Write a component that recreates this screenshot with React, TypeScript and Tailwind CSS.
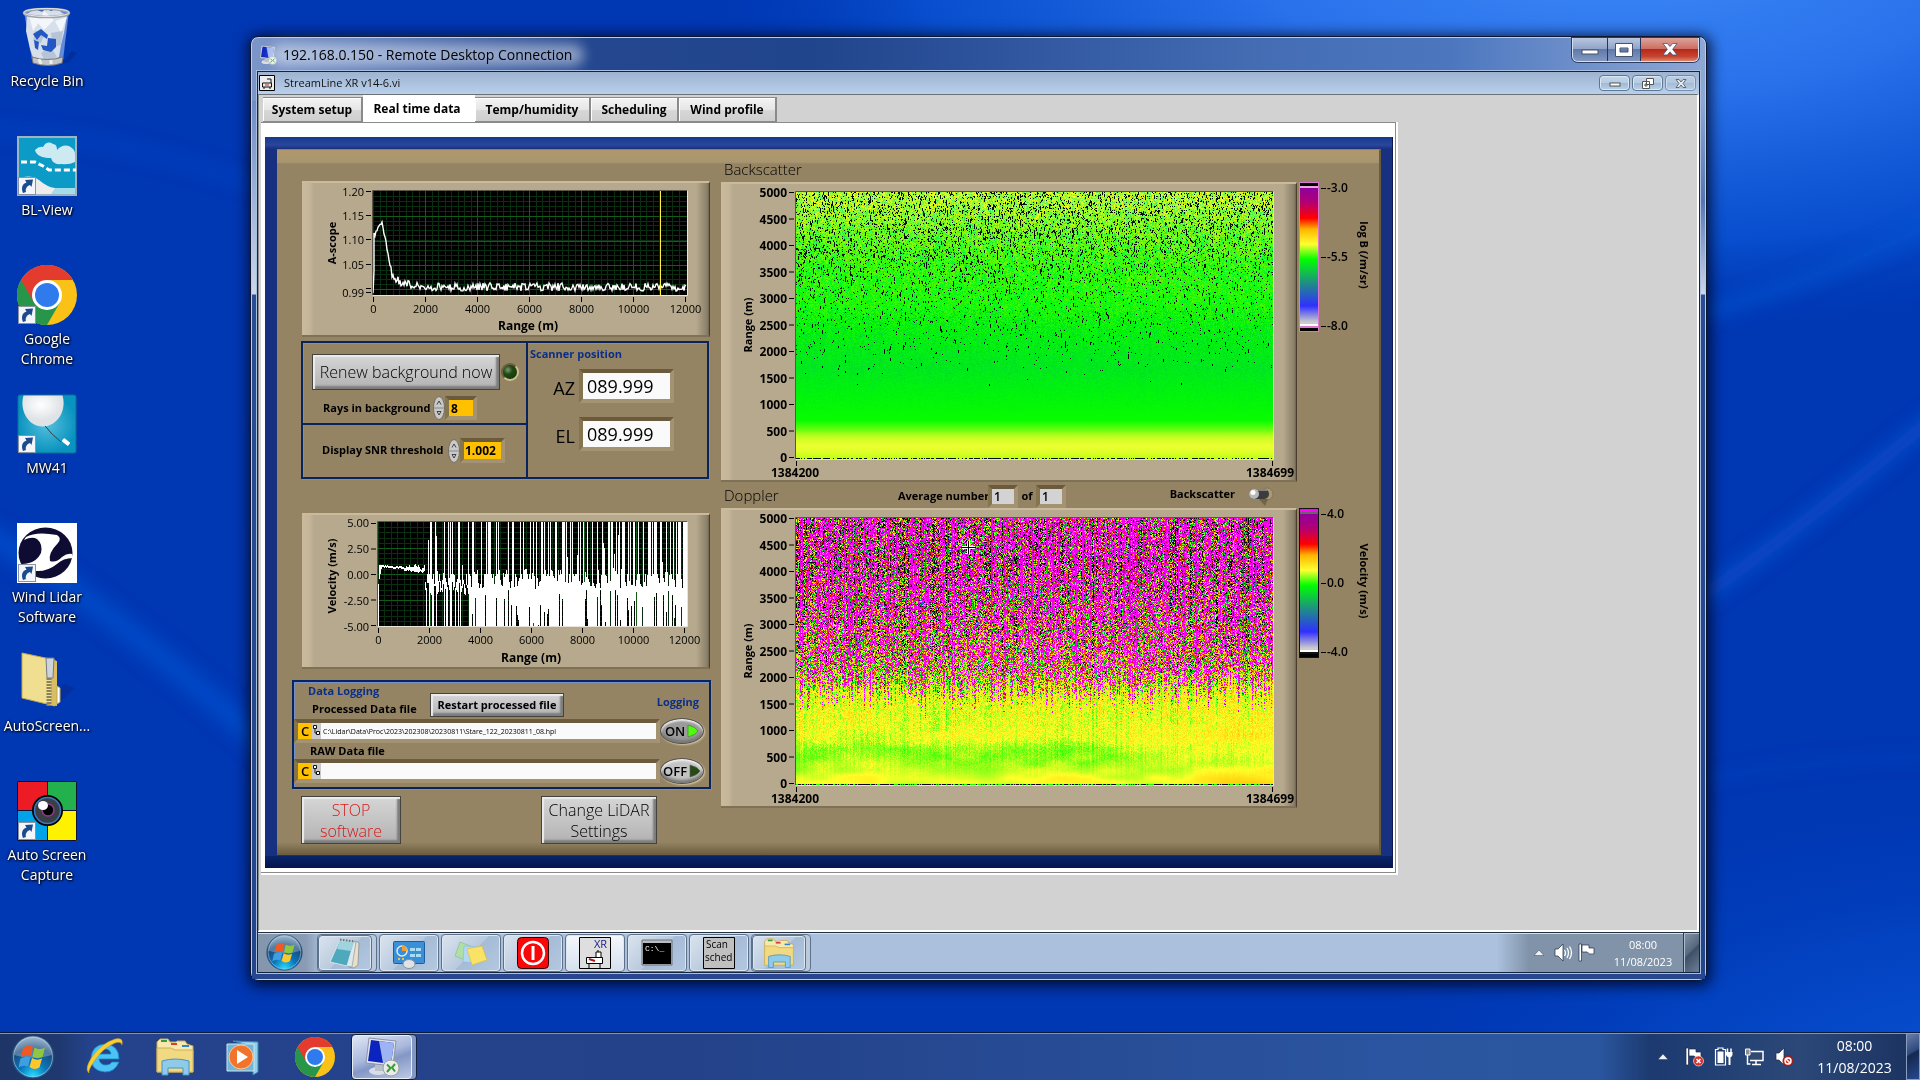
import React, { useEffect, useRef, useState } from 'react';

type Rgb = [number, number, number];
type Stop = [number, Rgb];
type Painter = (ctx: CanvasRenderingContext2D, w: number, h: number) => void;

const rng = (seed: number) => () => {
  seed = (seed + 0x6d2b79f5) | 0;
  let t = Math.imul(seed ^ (seed >>> 15), 1 | seed);
  t = (t + Math.imul(t ^ (t >>> 7), 61 | t)) ^ t;
  return ((t ^ (t >>> 14)) >>> 0) / 4294967296;
};

const clamp = (v: number, lo: number, hi: number) => Math.min(hi, Math.max(lo, v));

const ramp = (stops: Stop[], v: number): Rgb => {
  if (v <= stops[0][0]) return stops[0][1];
  for (let i = 1; i < stops.length; i++) {
    if (v <= stops[i][0]) {
      const [a, ca] = stops[i - 1];
      const [b, cb] = stops[i];
      const t = (v - a) / (b - a);
      return [0, 1, 2].map((k) => ca[k] + (cb[k] - ca[k]) * t) as Rgb;
    }
  }
  return stops[stops.length - 1][1];
};

// smooth value noise, used for the cloud-like structure near the ground
const smoothNoise = (seed: number) => {
  const r = rng(seed);
  const grid = Array.from({ length: 64 * 64 }, r);
  const at = (x: number, y: number) => grid[(y & 63) * 64 + (x & 63)];
  return (x: number, y: number) => {
    const xi = Math.floor(x);
    const yi = Math.floor(y);
    const fx = (x - xi) ** 2 * (3 - 2 * (x - xi));
    const fy = (y - yi) ** 2 * (3 - 2 * (y - yi));
    const top = at(xi, yi) * (1 - fx) + at(xi + 1, yi) * fx;
    const bot = at(xi, yi + 1) * (1 - fx) + at(xi + 1, yi + 1) * fx;
    return top * (1 - fy) + bot * fy;
  };
};

const rainbow: Stop[] = [
  [-4, [225, 225, 225]],
  [-3, [48, 48, 255]],
  [-0.1, [0, 255, 0]],
  [0.9, [255, 255, 40]],
  [1.8, [255, 184, 0]],
  [2.4, [255, 0, 0]],
  [4, [144, 0, 154]],
];

const put = (img: ImageData, x: number, y: number, c: Rgb) => {
  const i = (y * img.width + x) * 4;
  img.data[i] = c[0];
  img.data[i + 1] = c[1];
  img.data[i + 2] = c[2];
  img.data[i + 3] = 255;
};

const paintBackscatter: Painter = (ctx, w, h) => {
  const r = rng(11);
  const noise = smoothNoise(17);
  const img = ctx.createImageData(w, h);
  const level: Stop[] = [
    [0, [190, 255, 20]],
    [120, [222, 255, 40]],
    [250, [236, 255, 48]],
    [420, [190, 255, 30]],
    [560, [90, 255, 10]],
    [720, [8, 252, 0]],
    [1200, [0, 246, 10]],
    [1700, [0, 236, 26]],
    [2400, [4, 246, 10]],
    [3000, [26, 252, 4]],
    [3600, [46, 252, 8]],
    [4200, [100, 252, 18]],
    [4700, [160, 252, 34]],
    [5000, [180, 252, 40]],
  ];
  const black: Stop[] = [
    [0, [0, 0, 0]],
    [1300, [0, 0, 0]],
    [1500, [0.001, 0, 0]],
    [1900, [0.012, 0, 0]],
    [2600, [0.03, 0, 0]],
    [3300, [0.055, 0, 0]],
    [3800, [0.11, 0, 0]],
    [4500, [0.13, 0, 0]],
    [5000, [0.15, 0, 0]],
  ];
  const held = new Array<boolean>(w).fill(false);
  for (let y = 0; y < h; y++) {
    const m = 5000 * (1 - y / (h - 1));
    const base = ramp(level, m);
    const p = ramp(black, m)[0] * (0.6 + r() * 0.8);
    const spread = clamp((m - 600) / 4400, 0.05, 1);
    for (let x = 0; x < w; x++) {
      const hit = y >= h - 1 ? r() < 0.6 : r() < p || (held[x] && r() < 0.3);
      held[x] = hit;
      if (hit) {
        put(img, x, y, [0, 16, 0]);
        continue;
      }
      const n = (r() - 0.5) * spread + (noise(x / 3, y / 12) - 0.5) * spread * 0.3;
      const red = base[0] + n * clamp((m - 1800) / 6, 24, 190);
      const green = base[1] - Math.max(0, -n) * (m > 900 && m < 2800 ? 120 : 30);
      put(img, x, y, [clamp(red, 0, 255), green, base[2] + Math.max(0, -n) * 110]);
    }
  }
  ctx.putImageData(img, 0, 0);
};

const paintDoppler: Painter = (ctx, w, h) => {
  const r = rng(29);
  const noise = smoothNoise(5);
  const img = ctx.createImageData(w, h);
  const bias = Array.from({ length: w }, () => r() + r() + r() - 1.5);
  const reach = Array.from({ length: w }, () => 1300 + r() * 550);
  for (let y = 0; y < h; y++) {
    const m = 5000 * (1 - y / (h - 1));
    for (let x = 0; x < w; x++) {
      const drift = (noise(x / 70 + 7, y / 22 + 3) - 0.5) * 0.3 + (noise(x / 24, y / 7) - 0.5) * 0.4 * clamp(1.4 - m / 1000, 0.1, 1);
      const calm =
        0.66 +
        drift +
        clamp((x / w - 0.72) * 1.2, 0, 0.28) +
        clamp((260 - m) / 200, 0, 1) * clamp(x / w, 0, 0.3) -
        0.2 * Math.exp(-(((m - 550) / 240) ** 2)) * (x < w * 0.78 ? 1 : 0.2) +
        clamp((m - 700) / 900, 0, 0.2);
      // columns are coherent over long stretches of range
      const streak = bias[x] * 7 + (noise(x * 0.9, y / 26) - 0.5) * 6;
      const chance = clamp((m - reach[x]) / 420 + bias[x] * 0.3, 0, 1) * clamp(0.66 + m / 8000, 0, 1);
      let v: number;
      if (r() < chance) {
        const high = clamp((m - 1400) / 2600, 0, 1);
        v = (r() - 0.5) * (10 + high * 6) + 3.3 + high + streak * (0.5 + high * 0.5);
        if (r() < 0.3 * (1 - high)) v = 0.4 + (r() - 0.4) * 3;
        if (v < -0.8 && v > -4 && r() < 0.75) v = -0.2 + r() * 1.8;
        if (r() < 0.1 * high) v = -9;
      } else {
        const jitter = clamp(m / 1600, 0.03, 1.4);
        v = calm + (r() - 0.5) * jitter + bias[x] * 0.3 * clamp(m / 1200, 0.05, 1.8);
      }
      if (y >= h - 1) v = r() < 0.6 ? -9 : 0;
      const c: Rgb = v > 4 ? [248, 0, 244] : v < -4 ? [10, 0, 14] : ramp(rainbow, v);
      put(img, x, y, c);
    }
  }
  ctx.putImageData(img, 0, 0);
};

const paintVelocity: Painter = (ctx, w, h) => {
  const r = rng(77);
  ctx.fillStyle = '#000';
  ctx.fillRect(0, 0, w, h);
  ctx.fillStyle = '#0a2f10';
  for (let i = 0; i < 48; i++) ctx.fillRect(Math.round((i * w) / 48), 0, 1, h);
  for (let i = 1; i < 20; i++) ctx.fillRect(0, Math.round((i * h) / 20), w, 1);
  ctx.fillStyle = '#125a19';
  for (let i = 1; i < 6; i++) ctx.fillRect(Math.round((i * w) / 6), 0, 1, h);
  for (let i = 1; i < 4; i++) ctx.fillRect(0, Math.round((i * h) / 4), w, 1);

  ctx.fillStyle = '#fff';
  const yOf = (v: number) => Math.round(h / 2 - (v / 10) * h);
  const bar = (x: number, hi: number, lo: number) =>
    ctx.fillRect(x, yOf(hi), 1, Math.max(2, yOf(lo) - yOf(hi)));
  for (let x = 0; x < w; x++) {
    const km = (x / w) * 12;
    if (x < 1) bar(x, -1, -5);
    else if (x < 4) bar(x, 0.9, -1 + x * 0.5);
    else if (km < 1.8) {
      const s = 0.1 + Math.max(0, km - 0.6) * 0.8;
      const mid = 0.85 - km * 0.28;
      bar(x, mid + r() * s * 0.8, mid - r() * s * 0.6);
    } else {
      const open = km < 3.4 ? 0.34 : km < 9 ? 0.4 : 0.6;
      const top = r() < open ? 5 : r() < 0.1 ? r() * 4 : 0.5 - r() * 1.9;
      const deep = km < 3.6 ? 0.36 : 0.8;
      const low = r() < deep ? -5 : km < 3.6 ? -0.7 - r() * 1.4 : -1.5 - r() * 3.4;
      bar(x, x % 2 && r() < 0.4 ? Math.min(top, 0) : top, low);
    }
  }
};

function Plot({ width, height, paint }: { width: number; height: number; paint: Painter }) {
  const ref = useRef<HTMLCanvasElement>(null);
  useEffect(() => {
    const ctx = ref.current?.getContext('2d');
    if (ctx) paint(ctx, width, height);
  }, [width, height, paint]);
  return <canvas ref={ref} width={width} height={height} className="block" />;
}

/* ---------- charts ---------- */

const panelCls =
  'border-t-2 border-r border-b-2 border-t-[#cabb9d] border-r-[#4a3d2e] border-b-[#7e7156] bg-[linear-gradient(90deg,#cabb9f_0,#c4b598_8px,#b6a98d_12px,#b6a98d_calc(100%-13px),#8b8069_calc(100%-2px),#6f654f_100%)]';

const ascopeTrace = (() => {
  const r = rng(3);
  const pts: string[] = ['0,102', '1,80', '1,42'];
  for (let x = 2; x < 314; x++) {
    let y: number;
    if (x < 6) y = 42 - (x - 2) * 2 + r() * 4;
    else if (x < 9) y = 31 + r() * 5;
    else if (x < 19) y = 33 + ((x - 9) / 10) * 49 + (r() - 0.5) * 6;
    else y = 96 - 14 * Math.exp(-(x - 17) / 10) + (r() - 0.5) * 8;
    pts.push(`${x},${y.toFixed(1)}`);
  }
  return pts.join(' ');
})();

const rangeTicks = [0, 2000, 4000, 6000, 8000, 10000, 12000];

function RangeAxis({ x0, step, y }: { x0: number; step: number; y: number }) {
  return (
    <g>
      {rangeTicks.map((t, i) => (
        <g key={t}>
          <path d={`M${x0 + i * step} ${y}v5`} stroke="#000" />
          <text x={x0 + i * step} y={y + 16} textAnchor="middle">
            {t}
          </text>
        </g>
      ))}
    </g>
  );
}

function AScope() {
  const labels: [string, number][] = [
    ['1.20', 9],
    ['1.15', 33],
    ['1.10', 57],
    ['1.05', 82],
    ['0.99', 110],
  ];
  return (
    <figure className={`ml-[10px] w-[408px] ${panelCls}`}>
      <svg viewBox="0 0 407 152" className="block w-full overflow-visible font-['Open_Sans',sans-serif] text-[11px]">
        {labels.map(([t, y]) => (
          <g key={t}>
            <text x="62" y={y + 4} textAnchor="end">
              {t}
            </text>
            <path d={`M64 ${y - 0.5}h5`} stroke="#000" />
          </g>
        ))}
        <path d="M64 105.5h5" stroke="#000" />
        <text transform="translate(34 60) rotate(-90)" textAnchor="middle" className="text-[11px] font-bold">
          A-scope
        </text>
        <svg x="71" y="8" width="314" height="104" viewBox="0 0 314 104">
          <rect width="314" height="104" fill="#000" />
          <g stroke="#0a2f10" shapeRendering="crispEdges">
            {Array.from({ length: 48 }, (_, i) => (
              <path key={i} d={`M${Math.round(i * 6.5) + 0.5} 0v104`} />
            ))}
            {Array.from({ length: 20 }, (_, i) => (
              <path key={i} d={`M0 ${Math.round(i * 4.9) + 5.5}h314`} />
            ))}
          </g>
          <g stroke="#145c1c" shapeRendering="crispEdges">
            <path d="M52.5 0v104M104.5 0v104M156.5 0v104M208.5 0v104M260.5 0v104M0 25.5h314M0 50.5h314M0 74.5h314M0 98.5h314" />
          </g>
          <polyline points={ascopeTrace} fill="none" stroke="#fff" strokeWidth="1.4" />
          <rect x="287" width="1" height="104" fill="#fff23c" shapeRendering="crispEdges" />
        </svg>
        <path d="M70.5 112.5v-105h315" fill="none" stroke="#5c5648" />
        <path d="M70.5 112.5h315v-105" fill="none" stroke="#e8e4da" />
        <RangeAxis x0={71.5} step={52} y={114} />
        <text x="226" y="147" textAnchor="middle" className="text-[12px] font-bold">
          Range (m)
        </text>
      </svg>
    </figure>
  );
}

function VelocityChart() {
  return (
    <figure className={`mt-[34px] ml-[10px] w-[408px] ${panelCls}`}>
      <svg viewBox="0 0 407 152" className="block w-full overflow-visible font-['Open_Sans',sans-serif] text-[11px]">
        {['5.00', '2.50', '0.00', '-2.50', '-5.00'].map((t, i) => (
          <g key={t}>
            <text x="67" y={12 + i * 26} textAnchor="end">
              {t}
            </text>
            <path d={`M69 ${8.5 + i * 25.5}h5`} stroke="#000" />
          </g>
        ))}
        <text transform="translate(34 61) rotate(-90)" textAnchor="middle" className="text-[11px] font-bold">
          Velocity (m/s)
        </text>
        <foreignObject x="76" y="7" width="309" height="104">
          <Plot width={309} height={104} paint={paintVelocity} />
        </foreignObject>
        <path d="M75.5 111.5v-105h310" fill="none" stroke="#5c5648" />
        <path d="M75.5 111.5h310v-105" fill="none" stroke="#e8e4da" />
        <RangeAxis x0={76.5} step={51} y={113} />
        <text x="229" y="147" textAnchor="middle" className="text-[12px] font-bold">
          Range (m)
        </text>
      </svg>
    </figure>
  );
}

function HeatPanel({ paint, cursor }: { paint: Painter; cursor?: boolean }) {
  return (
    <figure className={`w-[576px] shrink-0 ${panelCls}`}>
      <svg viewBox="0 0 575 296" className="block w-full overflow-visible font-['Open_Sans',sans-serif] text-[12px] font-bold">
        {Array.from({ length: 11 }, (_, i) => (
          <g key={i}>
            <text x="66" y={13 + i * 26.5} textAnchor="end">
              {5000 - i * 500}
            </text>
            <path d={`M68 ${8.5 + i * 26.5}h5`} stroke="#000" />
          </g>
        ))}
        <text transform="translate(31 141) rotate(-90)" textAnchor="middle" className="text-[11px]">
          Range (m)
        </text>
        <foreignObject x="75" y="8" width="477" height="267">
          <Plot width={477} height={267} paint={paint} />
        </foreignObject>
        <path d="M74.5 275.5v-268h478" fill="none" stroke="#5c5648" />
        <path d="M74.5 275.5h478v-268" fill="none" stroke="#e8e4da" />
        <path d="M75.5 277v5M551.5 277v5" stroke="#000" />
        <text x="74" y="293" textAnchor="middle">
          1384200
        </text>
        <text x="549" y="293" textAnchor="middle">
          1384699
        </text>
        {cursor && (
          <g shapeRendering="crispEdges">
            <path d="M247.5 31v13M241 37.5h13" stroke="#fff" strokeWidth="3" />
            <path d="M247.5 31v13M241 37.5h13" stroke="#000" />
          </g>
        )}
      </svg>
    </figure>
  );
}

function ColorScale({ id, labels, title, top, frame }: {
  id: string;
  labels: string[];
  title: string;
  top: string;
  frame: string;
}) {
  return (
    <svg viewBox="0 0 76 150" className="ml-[2px] block w-[76px] overflow-visible font-['Open_Sans',sans-serif] text-[12px] font-semibold">
      <defs>
        <linearGradient id={id} x1="0" y1="0" x2="0" y2="1">
          <stop offset="0" stopColor="#90009a" />
          <stop offset=".1" stopColor="#b00078" />
          <stop offset=".22" stopColor="#ff0000" />
          <stop offset=".3" stopColor="#ffb400" />
          <stop offset=".41" stopColor="#ffff30" />
          <stop offset=".52" stopColor="#00ff00" />
          <stop offset=".7" stopColor="#1f8a8a" />
          <stop offset=".86" stopColor="#3030ff" />
          <stop offset=".98" stopColor="#cccccc" />
        </linearGradient>
      </defs>
      <rect width="20" height="150" fill={frame} />
      <rect x="1" y="1" width="18" height="3" fill={top} />
      <path d="M1 5h18" stroke="#fff" opacity=".7" />
      <rect x="1" y="6" width="18" height="137" fill={`url(#${id})`} />
      <rect x="1" y="142" width="18" height="2" fill="#fff" />
      <rect x="1" y="146" width="18" height="3" fill="#000" />
      {labels.map((t, i) => (
        <g key={t}>
          <path d={`M22 ${6.5 + i * 69}h5`} stroke="#000" />
          <text x="28" y={10 + i * 69}>
            {t}
          </text>
        </g>
      ))}
      <text transform="translate(61 73) rotate(90)" textAnchor="middle" className="text-[11px] font-bold">
        {title}
      </text>
    </svg>
  );
}

/* ---------- front panel controls ---------- */

const sunken = 'border-4 border-t-[#6b5a3c] border-l-[#85754f] border-r-[#a39372] border-b-[#a39372]';
const groove = 'border-2 border-[#08245e] shadow-[inset_1px_1px_0_#7890c4,1px_1px_0_#7890c4]';
const metalBtn =
  'border border-[#45433f] bg-[linear-gradient(#d6d6d6,#b2b2b2)] shadow-[inset_2px_2px_1px_#ececec,inset_-3px_-3px_2px_#7d7d7d]';

function Spinner() {
  return (
    <svg viewBox="0 0 12 24" className="h-6 w-3 shrink-0">
      <ellipse cx="6" cy="12" rx="5.5" ry="11.5" fill="#c9c9c9" stroke="#77705f" />
      <path d="M1 12h10" stroke="#888" />
      <path d="M4 8.5L6 5l2 3.5M4 15.5l2 3.5 2-3.5z" fill="none" stroke="#222" strokeWidth=".8" />
    </svg>
  );
}

function LogSwitch({ on }: { on: boolean }) {
  return (
    <button
      type="button"
      aria-pressed={on}
      className={`flex h-[26px] w-11 items-center justify-center gap-0.5 rounded-[50%] border border-[#55524a] text-[13px] leading-none font-semibold shadow-[1px_1px_2px_#d8c9a6,inset_0_2px_2px_#eee,inset_0_-3px_3px_#777] ${
        on ? 'bg-[#9b9b9b]' : 'bg-[#c4c4c4]'
      }`}
    >
      {on ? 'ON' : 'OFF'}
      <svg viewBox="0 0 12 14" className="h-3.5 w-3">
        <path d="M1 1Q9 3 11 7Q9 11 1 13z" fill={on ? '#4dfc0a' : '#254a16'} stroke="#5d5d5d" strokeWidth=".6" />
      </svg>
    </button>
  );
}

function PathRow({ id, value, on }: { id: string; value: string; on: boolean }) {
  return (
    <div className="flex items-center justify-between">
      <div className={`flex h-6 w-[368px] ${sunken}`}>
        <span className="flex w-[14px] items-center justify-center bg-[#ffc000] text-[13px] leading-none font-semibold">C</span>
        <svg viewBox="0 0 9 16" className="h-4 w-[9px] bg-[#c9c9c9]">
          <path d="M1.5 2.5h3v3h-3zM4.5 8.5h3v3h-3zM3 6v4h1.5" fill="#fff" stroke="#111" />
        </svg>
        <input
          id={id}
          defaultValue={value}
          className="min-w-0 flex-1 bg-[#fafafa] pl-0.5 font-['Open_Sans',sans-serif] text-[7px] leading-none"
        />
      </div>
      <LogSwitch on={on} />
    </div>
  );
}

function BackgroundBox() {
  return (
    <div className={`mt-1 ml-[9px] flex h-[138px] w-[408px] ${groove}`}>
      <div className="w-[225px] border-r-2 border-[#08245e]">
        <div className="h-[82px] border-b-2 border-[#08245e] pt-[11px] pl-[9px]">
          <div className="flex items-center gap-px">
            <button type="button" className={`h-9 w-[188px] text-[16px] font-light ${metalBtn}`}>
              Renew background now
            </button>
            <span className="size-[18px] rounded-full border-2 border-[#6d5f42] border-r-[#cdbd97] border-b-[#cdbd97] bg-[radial-gradient(circle_at_35%_35%,#7d9a76_0,#1f4a10_35%,#123006_100%)]" />
          </div>
          <div className="mt-1.5 ml-[11px] flex items-center gap-1">
            <label htmlFor="rays" className="w-[106px] text-[11px] font-bold whitespace-nowrap">
              Rays in background
            </label>
            <div className="flex items-center">
              <Spinner />
              <input
                id="rays"
                defaultValue="8"
                className={`h-6 w-8 bg-[#ffc000] pl-0.5 text-[12px] leading-none font-bold ${sunken}`}
              />
            </div>
          </div>
        </div>
        <div className="flex items-center gap-1 pt-[13px] pl-[19px]">
          <label htmlFor="snr" className="w-[122px] text-[11px] font-bold whitespace-nowrap">
            Display SNR threshold
          </label>
          <div className="flex items-center">
            <Spinner />
            <input
              id="snr"
              defaultValue="1.002"
              className={`h-[25px] w-[45px] bg-[#ffc000] pl-px text-[12px] leading-none font-bold ${sunken}`}
            />
          </div>
        </div>
      </div>
      <div className="flex-1 pl-[2px]">
        <p className="text-[11px] leading-[22px] font-bold text-[#0b2f86]">Scanner position</p>
        {[
          ['AZ', 'az'],
          ['EL', 'el'],
        ].map(([name, id]) => (
          <div key={id} className="mt-1 mb-[14px] flex items-center justify-end gap-1 pr-[33px]">
            <label htmlFor={id} className="pt-1 text-[18px] leading-none font-normal">
              {name}
            </label>
            <input
              id={id}
              readOnly
              defaultValue="089.999"
              className={`h-[34px] w-[95px] bg-[#fafafa] pl-1 text-[18px] leading-none ${sunken}`}
            />
          </div>
        ))}
      </div>
    </div>
  );
}

function LoggingBox() {
  return (
    <div className={`mt-[11px] h-[109px] w-[419px] pr-[5px] ${groove}`}>
      <div className="flex h-9 items-start pl-[14px]">
        <div className="w-[122px] text-[11px] leading-[18px] font-bold">
          <p className="text-[#0b2f86]">Data Logging</p>
          <label htmlFor="proc" className="block pl-1 whitespace-nowrap">
            Processed Data file
          </label>
        </div>
        <button type="button" className={`mt-[11px] h-6 w-[134px] text-[11px] font-bold whitespace-nowrap ${metalBtn}`}>
          Restart processed file
        </button>
        <span className="mt-[12px] ml-auto pr-[5px] text-[11px] font-bold text-[#0b2f86]">Logging</span>
      </div>
      <PathRow id="proc" on value="C:\Lidar\Data\Proc\2023\202308\20230811\Stare_122_20230811_08.hpl" />
      <label htmlFor="raw" className="block pl-4 text-[11px] leading-[14px] font-bold">
        RAW Data file
      </label>
      <PathRow id="raw" on={false} value="" />
    </div>
  );
}

function FrontPanel() {
  return (
    <div className="bg-[linear-gradient(#16398c,#2a479c_8px,#17307f_12px,#17307f_calc(100%-12px),#0a246c_calc(100%-12px),#04164a)] px-3 pt-3 pb-[13px] shadow-[inset_-1px_0_0_#0a1a50]">
      <div className="flex border-t border-r-2 border-t-[#8b8068] border-r-[#6a5c3f] bg-[linear-gradient(#b0966c,#a89670_12px,#948464_14px,#948464_calc(100%-13px),#6a5c3e)] font-['Open_Sans',sans-serif] text-black">
        <div className="w-[435px] shrink-0 pt-[31px] pb-[11px] pl-[15px]">
          <AScope />
          <BackgroundBox />
          <VelocityChart />
          <LoggingBox />
          <div className="mt-[7px] ml-[9px] flex justify-between pr-[55px]">
            <button type="button" className={`h-12 w-[100px] pt-0.5 text-[16px] leading-[21px] font-light text-[#d81818] ${metalBtn}`}>
              STOP
              <br />
              software
            </button>
            <button type="button" className={`h-12 w-[116px] pt-0.5 text-[16px] leading-[21px] font-light ${metalBtn}`}>
              Change LiDAR
              <br />
              Settings
            </button>
          </div>
        </div>
        <div className="ml-[9px] flex-1 pt-2 pr-[6px]">
          <h2 className="h-6 pl-[3px] text-[15px] leading-[22px] font-light">Backscatter</h2>
          <div className="flex items-start">
            <HeatPanel paint={paintBackscatter} />
            <ColorScale id="beta" labels={['-3.0', '-5.5', '-8.0']} title="log B (/m/sr)" top="#000" frame="#dc78d0" />
          </div>
          <div className="flex h-[26px] w-[554px] items-center pt-0.5 pl-[3px] text-[12px] font-semibold">
            <h2 className="w-[174px] pb-0.5 text-[15px] font-light">Doppler</h2>
            <label htmlFor="avg" className="w-[90px] text-[11px] font-bold whitespace-nowrap">
              Average number
            </label>
            <input id="avg" readOnly defaultValue="1" className={`h-[23px] w-[30px] bg-[#d3d3d3] pl-0.5 leading-none ${sunken}`} />
            <label htmlFor="avgOf" className="w-[18px] text-center text-[11px] font-bold">
              of
            </label>
            <input id="avgOf" readOnly defaultValue="1" className={`h-[23px] w-[30px] bg-[#d3d3d3] pl-0.5 leading-none ${sunken}`} />
            <span className="ml-auto pr-3 pb-1 text-[11px] font-bold">Backscatter</span>
            <button type="button" aria-label="Backscatter" className="h-5 w-7">
              <svg viewBox="0 0 28 20">
                <circle cx="20" cy="8" r="6" fill="#a89a78" stroke="#756648" strokeWidth=".6" />
                <path d="M10 11l11 2-3 7z" fill="#5d5036" opacity=".6" />
                <rect x="2" y="3" width="20" height="10" rx="5" fill="#3c3c3c" />
                <path d="M6 4h14" stroke="#9a9a9a" strokeWidth="1.5" />
                <circle cx="7" cy="8" r="5" fill="#b8b8b8" />
                <circle cx="6" cy="6.5" r="2.5" fill="#fff" />
              </svg>
            </button>
          </div>
          <div className="flex items-start">
            <HeatPanel paint={paintDoppler} cursor />
            <ColorScale id="vel" labels={['4.0', '0.0', '-4.0']} title="Velocity (m/s)" top="#f0f" frame="#111" />
          </div>
        </div>
      </div>
    </div>
  );
}

/* ---------- icons ---------- */

function Shortcut() {
  return (
    <svg viewBox="0 0 18 18" className="absolute bottom-px left-px size-[18px]">
      <rect x=".5" y=".5" width="17" height="17" fill="#f2f6fa" stroke="#8a949e" />
      <path d="M5 16C3 11 4 7 8.5 5.5L7 3l8-.5L13.5 10 12 8C9 9 7 12 8 15z" fill="#1d4a8c" />
    </svg>
  );
}

function ChromeIcon({ className }: { className: string }) {
  return (
    <svg viewBox="0 0 60 60" className={className}>
      <circle cx="30" cy="30" r="30" fill="#fbc116" />
      <path d="M30 30L4 15A30 30 0 0 0 30 60L43 37.5z" fill="#28964a" />
      <path d="M4 15A30 30 0 0 1 56 15H30L17 37.5z" fill="#e33b2e" />
      <circle cx="30" cy="30" r="15" fill="#fff" />
      <circle cx="30" cy="30" r="12" fill="#2f7bee" />
    </svg>
  );
}

function RecycleIcon() {
  return (
    <svg viewBox="0 0 60 60" className="size-[60px]">
      <path d="M45 56l10-12 5 2-9 10z" fill="#002a8a" opacity=".6" />
      <path d="M7 4h45l-6 49q-16 6-31 0z" fill="#7f9fe0" opacity=".8" />
      <path d="M10 7l8-5 7 3 4-4 5 3 6-3 5 5 5 2-3 18-3 12-2 12-8 5-16 1-5-14-4-18z" fill="#d6dfea" />
      <path d="M12 8l12 4-8 12zM27 4l10 9-10 10-6-7zM50 10l-12 4 6 12z" fill="#f3f6fa" />
      <path d="M18 24l10 2-4 10-8-2zM34 26l12-2-2 14-8 2zM24 46l10-6 6 10-12 4z" fill="#b5c4d6" />
      <path d="M16 27l8-5 7 6-1 4-6-4-4 5zM31 31l8 1 0 8-5 5-8-2-2-5 6 1zM17 33l5 2-1 8-3-2z" fill="#2457c4" />
      <ellipse cx="29.5" cy="6" rx="22.5" ry="4" fill="none" stroke="#9fa4aa" strokeWidth="2.5" />
      <ellipse cx="29.5" cy="5.5" rx="22.5" ry="4" fill="none" stroke="#e6e8ea" />
      <path d="M15 50q15 5 31 0l-1 6q-14 5-29 0z" fill="#c3c6c8" stroke="#777" />
      <path d="M22 52l2 5M34 53l0 4" stroke="#fff" strokeWidth="3" opacity=".7" />
    </svg>
  );
}

function BlViewIcon() {
  return (
    <svg viewBox="0 0 60 60" className="size-[60px]">
      <rect width="60" height="60" fill="#9fb4bc" />
      <rect x="2" y="2" width="56" height="56" fill="#0c9ac6" />
      <path d="M18 14q4-4 8-3 4-7 10-3 4 0 4 6 5-6 12-4 6 3 6 8v8q-6 3-14 2-8 1-10-6-14 0-16-8z" fill="#cdeaf2" />
      <path d="M4 26h14l8 4 6 4h27" fill="none" stroke="#fff" strokeWidth="3" strokeDasharray="6 3" />
      <path d="M2 42q12-4 20 2 8 7 16 8l20 0v6H2z" fill="#ececec" />
      <path d="M38 52h20v6H34z" fill="#a4dcea" />
    </svg>
  );
}

function BalloonIcon() {
  return (
    <svg viewBox="0 0 60 60" className="size-[60px]">
      <defs>
        <radialGradient id="mwSky">
          <stop offset="0" stopColor="#55c0dd" />
          <stop offset="1" stopColor="#0a93bf" />
        </radialGradient>
        <radialGradient id="mwBall" cx=".45" cy=".3">
          <stop offset="0" stopColor="#ffffff" />
          <stop offset="1" stopColor="#dfe3e6" />
        </radialGradient>
      </defs>
      <rect x="1" y="1" width="58" height="58" rx="2" fill="url(#mwSky)" stroke="#07719a" />
      <path d="M6.500 1.500h39C50 17 40 32 26 32.500S2 17 6.500 1.500z" fill="url(#mwBall)" />
      <path d="M28 32l2 2 4 5 10 9" fill="none" stroke="#344" />
      <rect x="45" y="46" width="8" height="4" rx="1" fill="#fff" transform="rotate(38 49 48)" />
    </svg>
  );
}

function LidarIcon() {
  return (
    <svg viewBox="0 0 60 60" className="size-[60px]">
      <rect width="60" height="60" fill="#fff" />
      <ellipse cx="28.5" cy="30" rx="27" ry="25.5" fill="#0e0c33" />
      <path d="M9 14q10-6 31-2 5 3 1 8-10 10-8 18 6 2 12-4 5-4 10-3l1 4q-10 0-16 6-10 8-22 7Q0 47 1 40q3 2 11 0 8-2 12-10 2-9-4-14-5-3-13 1z" fill="#fff" />
    </svg>
  );
}

function ZipIcon() {
  return (
    <svg viewBox="0 0 60 60" className="size-[60px]">
      <path d="M38 54l20-18-12-4z" fill="#062a86" opacity=".5" />
      <path d="M5 1l33 7v46L5 46z" fill="#f1df91" stroke="#c2a74c" />
      <path d="M34 8l6 1v45l-6-1z" fill="#d8bd62" />
      <path d="M32 26v28" stroke="#8c8158" strokeWidth="5" strokeDasharray="2 1" />
      <path d="M29 6h8l-1 20h-6z" fill="#cdd3da" stroke="#727a83" />
      <path d="M40 34l3 2v14l-3 2z" fill="#fff" stroke="#bda650" />
    </svg>
  );
}

function CaptureIcon() {
  return (
    <svg viewBox="0 0 60 60" className="size-[60px]">
      <path d="M0 0h30v30H0z" fill="#ed1c24" />
      <path d="M31 0h29v29H31z" fill="#22b14c" />
      <path d="M0 30h30v30H0z" fill="#00a2e8" />
      <path d="M31 30h29v30H31z" fill="#fff200" />
      <path d="M.5.5h59v59H.5zM30.5 0v60M0 29.5h60" fill="none" stroke="#113" />
      <circle cx="30.5" cy="29.5" r="14.5" fill="#3a3f46" stroke="#000" strokeWidth="2" />
      <circle cx="30.5" cy="29.5" r="13" fill="none" stroke="#3a78c4" strokeWidth="1.5" />
      <circle cx="31" cy="29" r="6" fill="#000" stroke="#8e3a90" strokeWidth="1.5" />
      <ellipse cx="26" cy="24.5" rx="5" ry="4.5" fill="#fff" />
    </svg>
  );
}

function StartOrb({ id, className }: { id: string; className: string }) {
  return (
    <svg viewBox="0 0 44 44" className={className}>
      <defs>
        <radialGradient id={id} cx=".5" cy=".95" r=".95">
          <stop offset="0" stopColor="#25dcff" />
          <stop offset=".35" stopColor="#0a76bb" />
          <stop offset=".7" stopColor="#1b4a7c" />
          <stop offset="1" stopColor="#8ba9c6" />
        </radialGradient>
      </defs>
      <circle cx="22" cy="22" r="21" fill={`url(#${id})`} stroke="#284a6c" />
      <circle cx="22" cy="22" r="19.5" fill="none" stroke="#9cc0dd" opacity=".7" />
      <path d="M3 20A19 19 0 0 1 41 20Q22 26 3 20z" fill="#dfeaf3" opacity=".3" />
      <path d="M12 13q5-4 10-1l-2 9q-5-2-10 1z" fill="#ef5a24" />
      <path d="M23.5 12.5q5 3 10.5 0l-2.5 9.5q-5 2.5-10-.5z" fill="#8fc73e" />
      <path d="M9.5 23.5q5-3 10-1l-2.5 9q-5-2-9.5 1z" fill="#3f9fe0" />
      <path d="M21 23q5 3 10 .5L28.5 32.5q-5 3-10-.5z" fill="#fcc72c" />
    </svg>
  );
}

function IeIcon() {
  return (
    <svg viewBox="0 0 40 40" className="size-10">
      <path d="M35 22H15q1 6 7 6 4 0 6-3h7q-4 10-14 10Q7 34 7 21 8 8 21 7q14 1 14 15zM15 17h12q-1-5-6-5t-6 5z" fill="#4cc3f4" stroke="#1586c6" strokeWidth=".8" />
      <path d="M5 36q-5-4 3-16Q18 6 31 2q9-2 7 6-1-4-7-2-12 5-20 17-7 10-6 13z" fill="#f8cf31" stroke="#c9961a" strokeWidth=".5" />
    </svg>
  );
}

function ExplorerIcon({ className }: { className: string }) {
  return (
    <svg viewBox="0 0 40 38" className={className}>
      <path d="M2 4l3-3h8l2 3h6l1-1h8l2 3 6 2v26H2z" fill="#f7e9ab" stroke="#c7a856" />
      <path d="M6 2h6v2H6z" fill="#3b9a3f" />
      <path d="M16 5h6v2h-6z" fill="#d54034" />
      <path d="M27 7h7v2h-7z" fill="#2f84cc" />
      <path d="M2 10h14l4 2h18v22H2z" fill="#f1d981" stroke="#cdb05c" />
      <path d="M7 23q13-4 27 0v14h-6v-7H13v7H7z" fill="#8ecbea" stroke="#4d94c0" />
    </svg>
  );
}

function WmpIcon() {
  return (
    <svg viewBox="0 0 38 38" className="size-[38px]">
      <path d="M8 3l25 1v30l-5 3V8z" fill="#8fd0ea" stroke="#3f88ae" />
      <path d="M2 6h27v27H2z" fill="#6fb6d8" stroke="#d1e6ee" />
      <circle cx="16" cy="19" r="12" fill="#f2742a" stroke="#fbc9a1" />
      <path d="M12 12l11 7-11 7z" fill="#fff" />
    </svg>
  );
}

function RdpIcon({ className }: { className: string }) {
  return (
    <svg viewBox="0 0 40 40" className={className}>
      <ellipse cx="16" cy="34" rx="9" ry="4" fill="#d8dde6" />
      <path d="M13 26h8v8h-8z" fill="#b9c0cc" />
      <path d="M7 1l27 3-3 25L4 26z" fill="#dfe4ec" stroke="#8c94a4" />
      <path d="M9 3l23 3-3 21L6 24z" fill="#0b24c0" />
      <path d="M17 4l15 2-3 21-8-1z" fill="#9db4f2" />
      <circle cx="29" cy="31" r="8" fill="#e9ece9" stroke="#9aa39a" />
      <path d="M25 27.500l3.500 3.500L25 35M33 27l-3 3.500 3 4" fill="none" stroke="#3c9c3c" strokeWidth="2" />
    </svg>
  );
}

const TrayArrow = () => (
  <svg viewBox="0 0 10 6" className="h-1.5 w-2.5">
    <path d="M5 0l5 5.500H0z" fill="#eef3f8" stroke="#223" strokeWidth=".4" />
  </svg>
);

function FlagIcon({ alert }: { alert?: boolean }) {
  return (
    <svg viewBox="0 0 20 20" className="size-5">
      <path d="M2 1h2.500v17H2z" fill="#fff" stroke="#1d2c44" strokeWidth=".7" />
      <path d="M5 2h7v3h5v6q-5 1-7-2H5z" fill="#fff" stroke="#1d2c44" strokeWidth=".7" />
      {alert && (
        <>
          <circle cx="14.500" cy="14" r="5" fill="#d8322a" stroke="#fff" strokeWidth=".6" />
          <path d="M12.500 12l4 4m0-4l-4 4" stroke="#fff" strokeWidth="1.600" />
        </>
      )}
    </svg>
  );
}

function BatteryIcon() {
  return (
    <svg viewBox="0 0 20 20" className="size-5">
      <path d="M4 1h5v1.500h2.500v15.500H1.500V2.500H4z" fill="none" stroke="#fff" strokeWidth="1.200" />
      <path d="M3.500 4.500h6v11.500h-6z" fill="#fff" />
      <path d="M13.500 1.500v4M17 1.500v4" stroke="#fff" strokeWidth="1.500" />
      <path d="M12 5h6.500v3q-1 2.500-3 2.500t-3.500-2.500z" fill="#fff" />
      <path d="M15.500 10v8" stroke="#fff" strokeWidth="2" />
    </svg>
  );
}

function NetworkIcon() {
  return (
    <svg viewBox="0 0 20 20" className="size-5">
      <path d="M7 4.500h12v9H6" fill="#304a72" stroke="#fff" strokeWidth="1.500" />
      <path d="M12 14v3M8 17.500h9" stroke="#fff" strokeWidth="1.500" />
      <path d="M1.500 2h4.500v6H1.500z" fill="#8d8d8d" stroke="#fff" />
      <path d="M3.500 8v9h3" fill="none" stroke="#fff" strokeWidth="1.500" />
    </svg>
  );
}

function SpeakerIcon({ muted }: { muted?: boolean }) {
  return (
    <svg viewBox="0 0 20 20" className="size-5">
      <path d="M2 6h3l5-5v17l-5-5H2z" fill="#fff" stroke="#1d2c44" strokeWidth=".7" />
      {muted ? (
        <>
          <circle cx="14" cy="14" r="5" fill="#d8322a" stroke="#8d1a14" />
          <circle cx="14" cy="14" r="3" fill="none" stroke="#fff" strokeWidth="1.400" />
          <path d="M12 12l4 4" stroke="#fff" strokeWidth="1.400" />
        </>
      ) : (
        <path d="M11.500 7q2 3 0 6M14 5q3 4.500 0 10M16.500 3.500q4 6 0 12.500" fill="none" stroke="#fff" strokeWidth="1.300" />
      )}
    </svg>
  );
}

/* ---------- desktop ---------- */

const desktopItems: { name: string; icon: React.ReactNode; link?: boolean; narrow?: boolean }[] = [
  { name: 'Recycle Bin', icon: <RecycleIcon /> },
  { name: 'BL-View', icon: <BlViewIcon />, link: true },
  { name: 'Google Chrome', icon: <ChromeIcon className="size-[60px]" />, link: true, narrow: true },
  { name: 'MW41', icon: <BalloonIcon />, link: true },
  { name: 'Wind Lidar Software', icon: <LidarIcon />, link: true },
  { name: 'AutoScreen...', icon: <ZipIcon /> },
  { name: 'Auto Screen Capture', icon: <CaptureIcon />, link: true },
];

function DesktopIcons() {
  return (
    <ul className="flex w-[94px] flex-col pt-[7px]">
      {desktopItems.map(({ name, icon, link, narrow }) => (
        <li key={name} className="h-[129px]">
          <a
            href="#"
            className="flex flex-col items-center text-center text-[14px] leading-5 text-white [text-shadow:1px_1px_2px_#000,0_0_3px_#001]"
          >
            <span className="relative block size-[60px]">
              {icon}
              {link && <Shortcut />}
            </span>
            <span className={narrow ? 'w-16 pt-1' : 'pt-1'}>{name}</span>
          </a>
        </li>
      ))}
    </ul>
  );
}

function Wallpaper() {
  return (
    <svg viewBox="0 0 1920 1080" preserveAspectRatio="none" className="absolute inset-0 h-full w-full">
      <defs>
        <radialGradient id="glow" cx="1" cy="0" r="1" gradientUnits="userSpaceOnUse" gradientTransform="translate(660 -70) scale(960 420)">
          <stop offset="0" stopColor="#3f8cf8" />
          <stop offset=".4" stopColor="#2b74ee" stopOpacity=".95" />
          <stop offset=".75" stopColor="#0a55d6" stopOpacity=".75" />
          <stop offset="1" stopColor="#0037b3" stopOpacity="0" />
        </radialGradient>
        <radialGradient id="low" cx="1" cy="0" r="1" gradientUnits="userSpaceOnUse" gradientTransform="translate(1300 1120) scale(700 360)">
          <stop offset="0" stopColor="#0b57d8" />
          <stop offset=".5" stopColor="#0448c8" stopOpacity=".7" />
          <stop offset="1" stopColor="#0037b3" stopOpacity="0" />
        </radialGradient>
        <filter id="soft">
          <feGaussianBlur stdDeviation="9" />
        </filter>
      </defs>
      <rect width="1920" height="1080" fill="#0037b3" />
      <rect width="1920" height="1080" fill="url(#low)" />
      <rect width="1920" height="1080" fill="url(#glow)" />
      <g fill="none" stroke="#0b5ad8" filter="url(#soft)">
        <path d="M-20 530Q90 590 270 750" strokeWidth="22" opacity=".55" />
        <path d="M-20 130Q120 135 270 190" strokeWidth="8" opacity=".4" />
        <path d="M1680 318Q1800 290 1940 220" strokeWidth="12" opacity=".6" />
        <path d="M1680 612Q1800 530 1940 412" strokeWidth="14" opacity=".7" />
        <path d="M1690 782Q1800 760 1940 756" strokeWidth="4" opacity=".4" />
      </g>
    </svg>
  );
}

/* ---------- remote desktop window ---------- */

const captionBtn = 'flex items-center justify-center border-r border-[#23365c] bg-[linear-gradient(#b9c6de_0,#8fa3c8_48%,#5f79aa_50%,#8298c2_100%)]';

function CaptionButtons() {
  return (
    <div className="mr-px flex h-6 w-[127px] overflow-hidden rounded-b-md border border-t-0 border-[#d3def0] shadow-[0_0_0_1px_#2c3d60]">
      <button type="button" aria-label="Minimize" className={`w-[35px] ${captionBtn}`}>
        <svg viewBox="0 0 18 12" className="w-[18px]">
          <rect x="1" y="6" width="16" height="4" fill="#fff" stroke="#46526c" />
        </svg>
      </button>
      <button type="button" aria-label="Maximize" className={`w-[33px] ${captionBtn}`}>
        <svg viewBox="0 0 18 14" className="w-[18px]">
          <path fillRule="evenodd" d="M.5.5h17v13H.5zM5 5h8v4H5z" fill="#fff" stroke="#46526c" />
        </svg>
      </button>
      <button
        type="button"
        aria-label="Close"
        className="flex flex-1 items-center justify-center bg-[linear-gradient(#dca49b_0,#cd6c60_48%,#b8281a_50%,#c6442f_80%,#dd8467_100%)]"
      >
        <svg viewBox="0 0 18 14" className="w-[16px]">
          <path d="M1 .5h5l3 3.500 3-3.500h5L12 7l5 6.500h-5L9 10l-3 3.500H1L6 7z" fill="#fff" stroke="#46526c" strokeWidth=".9" />
        </svg>
      </button>
    </div>
  );
}

const mdiBtn = 'flex h-4 w-[31px] items-center justify-center rounded-sm border border-[#5d7894] bg-[linear-gradient(#c4d7ea_0,#b6cce2_48%,#9fb9d3_50%,#b9d0e8_100%)] shadow-[inset_0_0_0_1px_#dbe8f4]';

function MdiTitle() {
  return (
    <div className="flex h-[22px] items-center bg-[linear-gradient(#9db3cf,#b9d0ec)] pr-[3px] pl-px">
      <svg viewBox="0 0 16 16" className="size-4">
        <path d="M.5.5h15v15H.5z" fill="#eee" stroke="#000" />
        <path d="M3.500 8h9v4h-9zM5 12v2M11 12v2M8 4h4v4" fill="none" stroke="#111" />
        <path d="M6 10h4" stroke="#c22" />
      </svg>
      <span className="pl-[9px] text-[11px] text-[#111]">StreamLine XR v14-6.vi</span>
      <div className="ml-auto flex gap-[2px]">
        <button type="button" aria-label="Minimize" className={mdiBtn}>
          <svg viewBox="0 0 12 8" className="w-3">
            <rect x="1" y="4" width="10" height="3" fill="#fff" stroke="#555" />
          </svg>
        </button>
        <button type="button" aria-label="Restore" className={mdiBtn}>
          <svg viewBox="0 0 12 11" className="w-3">
            <path d="M4.500.5h7v6h-7zM.5 3.500h7v7h-7zM3 6h2v2H3z" fill="#fff" stroke="#555" />
          </svg>
        </button>
        <button type="button" aria-label="Close" className={`opacity-70 ${mdiBtn}`}>
          <svg viewBox="0 0 12 9" className="w-3">
            <path d="M1 .5h3l2 2.500L8 .5h3L8 4.500l3 4H8L6 6 4 8.500H1l3-4z" fill="#fff" stroke="#444" />
          </svg>
        </button>
      </div>
    </div>
  );
}

const tabs = [
  { name: 'System setup', cls: 'w-[100px]' },
  { name: 'Real time data', cls: 'w-[112px]' },
  { name: 'Temp/humidity', cls: 'w-[116px]' },
  { name: 'Scheduling', cls: 'w-[88px]' },
  { name: 'Wind profile', cls: 'w-[98px]' },
];

function TabBar() {
  const [active, setActive] = useState('Real time data');
  return (
    <div role="tablist" className="flex h-[27px] items-end pl-[2px]">
      {tabs.map(({ name, cls }) => (
        <button
          key={name}
          type="button"
          role="tab"
          aria-selected={active === name}
          onClick={() => setActive(name)}
          className={`border-[#8a8a8a] text-[12px] font-bold whitespace-nowrap text-black ${cls} ${
            active === name
              ? 'h-[27px] bg-white pr-1'
              : 'h-[25px] border-t border-r-2 border-b bg-[linear-gradient(#f4f4f4,#e6e6e6_50%,#d6d6d6_55%,#cfcfcf)] shadow-[inset_1px_1px_0_#fff]'
          }`}
        >
          {name}
        </button>
      ))}
    </div>
  );
}

const remoteApps: { name: string; icon: React.ReactNode; active?: boolean; stack?: boolean }[] = [
  {
    name: 'Notepad',
    stack: true,
    icon: (
      <svg viewBox="0 0 32 32" className="size-8">
        <path d="M27 4l3 2-1 22-4 3-5-1z" fill="#e9dfc8" stroke="#8a8f94" strokeWidth=".8" />
        <path d="M12 3l15 2-4 25-6-1z" fill="#dce8ee" stroke="#9aa2a8" strokeWidth=".8" />
        <path d="M11 3l14 2-7 24L1 25z" fill="#4fa9bd" stroke="#e7eef0" strokeWidth=".8" />
        <path d="M11 3l14 2-3 9-14-2z" fill="#9fd3dd" />
        <path d="M11 2.500l15 2" stroke="#6c7176" strokeWidth="2" strokeDasharray="1.5 1.5" />
      </svg>
    ),
  },
  {
    name: 'Control Panel',
    icon: (
      <svg viewBox="0 0 32 32" className="size-8">
        <rect x=".5" y="4.500" width="31" height="22" rx="1" fill="#3b8fd6" stroke="#1d5e9e" />
        <circle cx="9" cy="14" r="5" fill="#3b8fd6" stroke="#d9ecfa" strokeWidth="1.500" />
        <path d="M9 14V8a6 6 0 0 1 5 6z" fill="#f0a032" />
        <path d="M17 11h5v3h-5zM23 11h5v3h-5zM17 17h5v3h-5zM23 17h5v3h-5z" fill="#a6dcf6" />
        <path d="M5 22h2M9 22h2" stroke="#f6c042" strokeWidth="2" />
        <ellipse cx="16" cy="27" rx="6" ry="4.500" fill="#dfe3e8" stroke="#8b9299" />
      </svg>
    ),
  },
  {
    name: 'Sticky Notes',
    icon: (
      <svg viewBox="0 0 32 32" className="size-8">
        <path d="M5 5l13 5-5 14L0 19z" fill="#aee0a6" stroke="#86bb80" strokeWidth=".6" />
        <path d="M9 9l15 1-1 16-15-1z" fill="#b3d9f2" stroke="#8cb6d6" strokeWidth=".6" />
        <path d="M12 12l15-3 5 14-15 5z" fill="#f9e265" stroke="#d9bb3b" strokeWidth=".6" />
      </svg>
    ),
  },
  {
    name: 'Shutdown',
    icon: (
      <svg viewBox="0 0 32 32" className="size-8">
        <rect x=".5" y=".5" width="31" height="31" rx="4" fill="#f80808" stroke="#300" />
        <circle cx="16" cy="16" r="11" fill="none" stroke="#fff" strokeWidth="2.500" />
        <path d="M16 9v14" stroke="#fff" strokeWidth="3" />
      </svg>
    ),
  },
  {
    name: 'StreamLine XR',
    active: true,
    icon: (
      <svg viewBox="0 0 32 32" className="size-8 text-[11px]">
        <path d="M.5.5h31v31H.5z" fill="#dedede" stroke="#000" />
        <text x="15" y="11" fill="#1a1a8c">
          XR
        </text>
        <path d="M7.500 20.500h16v6h-16zM17 20v-5h5v5M10 26v6M21 26v6M19 15v-2" fill="#fff" stroke="#000" />
        <path d="M10 22l6 2" stroke="#b01818" strokeWidth="2" />
      </svg>
    ),
  },
  {
    name: 'Command Prompt',
    icon: (
      <svg viewBox="0 0 32 32" className="size-8 font-['Liberation_Mono',monospace] text-[8px]">
        <path d="M1 3h30v25H1z" fill="#b9bcc0" stroke="#6c7076" />
        <path d="M2 6h28v21H2z" fill="#000" />
        <text x="4" y="14" fill="#fff">
          C:\_
        </text>
      </svg>
    ),
  },
  {
    name: 'Scan scheduler',
    icon: (
      <svg viewBox="0 0 32 32" className="size-8 overflow-visible text-[10px]">
        <path d="M.5.5h31v31H.5z" fill="#c0c0c0" stroke="#000" />
        <text x="3" y="11">
          Scan
        </text>
        <text x="2" y="24">
          sched
        </text>
      </svg>
    ),
  },
  { name: 'Explorer', stack: true, icon: <ExplorerIcon className="w-8" /> },
];

const endCap = 'h-full border-l border-[#2c3c58] bg-[linear-gradient(135deg,#8494a8_0,#58697f_45%,#3d5068_50%,#6c7f96_100%)] shadow-[inset_1px_1px_0_#aebccb]';

function RemoteTaskbar() {
  return (
    <div className="flex h-10 items-center border-t border-[#23303f] bg-[linear-gradient(90deg,#8496ac_0,#8a9cb4_48px,#a9bfdb_64px,#abc1dd_1240px,#a9bfdb_calc(100%-205px),#8093a9_calc(100%-170px))] shadow-[inset_0_1px_0_#d4e0ee]">
      <button type="button" aria-label="Start" className="mr-[14px] ml-2">
        <StartOrb id="orbSmall" className="size-[37px]" />
      </button>
      <div className="flex h-full items-center gap-[2px] pt-px">
        {remoteApps.map(({ name, icon, active, stack }) => (
          <div
            key={name}
            className={stack ? 'h-[38px] w-[60px] rounded-sm border border-[#5d7188] bg-[#b9cade] pr-1' : 'h-[38px] w-[60px]'}
          >
            <button
              type="button"
              aria-label={name}
              className={`flex h-full w-full items-center justify-center rounded-sm border border-[#5d7188] shadow-[inset_0_0_0_1px_#dde7f1] ${
                active ? 'bg-[linear-gradient(#f5f8fc,#d5e0ee)]' : 'bg-[linear-gradient(135deg,#dbe4ef_0,#b9cade_50%,#a5bbd6_52%,#b4c8e0_100%)]'
              }`}
            >
              {icon}
            </button>
          </div>
        ))}
      </div>
      <div className="ml-auto flex h-full items-center text-white">
        <TrayArrow />
        <div className="flex gap-1 pr-[6px] pl-[9px]">
          <SpeakerIcon />
          <FlagIcon />
        </div>
        <time className="w-[80px] text-center text-[11px] leading-[17px]">
          08:00
          <br />
          11/08/2023
        </time>
        <span className={`w-4 ${endCap}`} />
      </div>
    </div>
  );
}

function RemoteWindow() {
  return (
    <section className="absolute top-9 right-[213px] bottom-[51px] left-[250px] flex flex-col rounded-lg border border-[#0c1630] bg-[linear-gradient(90deg,#7c96c9_0,#5f7db9_120px,#24478f_340px,#21458c_560px,#2c529b_720px,#436cb3_1000px,#4c77bf_1200px,#8ea8d6_100%)] px-[6px] pb-[7px] shadow-[inset_0_0_0_1px_#b9cbe8,1px_2px_14px_3px_rgba(0,0,20,0.75)]">
      <span className="pointer-events-none absolute top-16 bottom-px left-px w-[5px] bg-[linear-gradient(#6f8cc6_0,#cdd6ea_193px,#2a4c94_194px,#24458b_100%)]" />
      <span className="pointer-events-none absolute top-16 right-px bottom-px w-[5px] bg-[linear-gradient(#8ea8d6_0,#5576b4_100px,#cdd6ea_193px,#2a4c94_194px,#24458b_100%)]" />
      <span className="pointer-events-none absolute right-px bottom-px left-px h-[6px] rounded-b-md bg-[#27488f]" />
      <header className="flex h-[34px] shrink-0 items-start pt-px">
        <div className="flex items-center pt-[6px] pl-px">
          <RdpIcon className="size-5" />
          <h1 className="relative ml-[5px] text-[14px] leading-[22px] text-black">
            <span className="absolute -inset-x-3 inset-y-0 rounded-full bg-white/45 blur-[6px]" />
            <span className="relative">192.168.0.150 - Remote Desktop Connection</span>
          </h1>
        </div>
        <div className="ml-auto">
          <CaptionButtons />
        </div>
      </header>
      <div className="relative flex min-h-0 flex-1 flex-col border border-[#16243f] bg-[#d2d2d2] shadow-[0_0_0_1px_#aabfe0]">
        <MdiTitle />
        <div className="flex-1 overflow-hidden border-t border-r-2 border-b-2 border-l border-t-[#6d7278] border-r-white border-b-white border-l-[#8b8b8b] pl-[2px]">
          <TabBar />
          <div className="w-[1137px] border-r-2 border-b-2 border-white bg-[#8b8b8b] pr-px pb-px">
            <div className="border-t border-[#8b8b8b] bg-white pt-[14px] pr-[2px] pb-1 pl-1">
              <FrontPanel />
            </div>
          </div>
        </div>
        <RemoteTaskbar />
      </div>
    </section>
  );
}

function Taskbar() {
  return (
    <footer className="relative flex h-12 shrink-0 items-center border-t border-[#0c1a3c] bg-[linear-gradient(90deg,#1e3568_0,#1f3870_60px,#24438c_90px,#23428a_700px,#2b55a0_1400px,#2a569f_1600px,#1c3a70_1650px,#2b4878_1800px,#1d3563_1900px)] shadow-[inset_0_1px_0_#7f93bf]">
      <button type="button" aria-label="Start" className="ml-[11px]">
        <StartOrb id="orbLarge" className="size-11" />
      </button>
      <nav className="flex h-full items-center">
        <button type="button" aria-label="Internet Explorer" className="ml-[29px]">
          <IeIcon />
        </button>
        <button type="button" aria-label="Windows Explorer" className="ml-[31px]">
          <ExplorerIcon className="w-10" />
        </button>
        <button type="button" aria-label="Media Player" className="ml-[30px]">
          <WmpIcon />
        </button>
        <button type="button" aria-label="Google Chrome" className="ml-[32px]">
          <ChromeIcon className="size-10" />
        </button>
        <div className="ml-4 h-[46px] rounded-sm border border-[#111f40] bg-[#8397c4] pr-1">
          <button
            type="button"
            aria-label="Remote Desktop Connection"
            className="flex h-full w-[60px] items-center justify-center rounded-sm border border-[#e8eefa] bg-[linear-gradient(160deg,#dfe6f4_0,#a9b8dc_45%,#8397c6_60%,#bcc9e4_100%)]"
          >
            <RdpIcon className="size-10" />
          </button>
        </div>
      </nav>
      <div className="ml-auto flex h-full items-center text-white">
        <TrayArrow />
        <div className="flex gap-[10px] pr-[5px] pl-[16px]">
          <FlagIcon alert />
          <BatteryIcon />
          <NetworkIcon />
          <SpeakerIcon muted />
        </div>
        <time className="w-[107px] pl-1 text-center text-[14px] leading-[22px]">
          08:00
          <br />
          11/08/2023
        </time>
        <span className="h-full w-[14px] border border-[#8c9dc0] bg-[linear-gradient(150deg,#6a7ea8_0,#2f4a7e_40%,#14294f_45%,#27488e_100%)]" />
      </div>
    </footer>
  );
}

export default function App() {
  return (
    <main className="relative flex h-screen flex-col overflow-hidden font-['Open_Sans',sans-serif]">
      <Wallpaper />
      <div className="relative min-h-0 flex-1">
        <DesktopIcons />
        <RemoteWindow />
      </div>
      <Taskbar />
    </main>
  );
}
